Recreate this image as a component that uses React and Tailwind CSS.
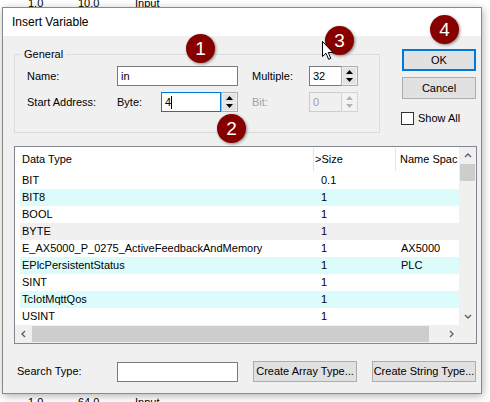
import React from "react";

function Tri({ up, color }) {
  return (
    <svg width="7" height="4" viewBox="0 0 7 4" className="block">
      {up ? (
        <path d="M3.5 0 L7 4 L0 4 Z" fill={color} />
      ) : (
        <path d="M0 0 L7 0 L3.5 4 Z" fill={color} />
      )}
    </svg>
  );
}

function Spinner({ disabled }) {
  const c = disabled ? "#b5b5b5" : "#000";
  return (
    <div className={`flex flex-col w-[17px] h-full border ${disabled ? "border-[#d5d5d5]" : "border-[#adadad]"} bg-[#f0f0f0] p-[1px] gap-[1px]`}>
      <div className={`flex-1 flex items-center justify-center ${disabled ? "bg-[#f4f4f4]" : "bg-[#e3e3e3]"}`}>
        <Tri up color={c} />
      </div>
      <div className={`flex-1 flex items-center justify-center ${disabled ? "bg-[#f4f4f4]" : "bg-[#e3e3e3]"}`}>
        <Tri color={c} />
      </div>
    </div>
  );
}

function Badge({ n, cls }) {
  return (
    <div
      className={`absolute ${cls} w-[29px] h-[29px] rounded-full bg-[#870000] text-white text-[19px] leading-none flex items-center justify-center shadow-[1px_1px_3px_rgba(0,0,0,0.45)] font-['Liberation_Sans',Arial,sans-serif]`}
    >
      {n}
    </div>
  );
}

function Chevron({ dir }) {
  const paths = {
    up: "M1 5 L4 2 L7 5",
    down: "M1 2 L4 5 L7 2",
    left: "M5 1 L2 4 L5 7",
    right: "M3 1 L6 4 L3 7",
  };
  return (
    <svg width="8" height="8" viewBox="0 0 8 8" className="block">
      <path d={paths[dir]} fill="none" stroke="#606060" strokeWidth="1.4" />
    </svg>
  );
}

const rows = [
  { t: "BIT", s: "0.1", n: "", bg: "bg-white" },
  { t: "BIT8", s: "1", n: "", bg: "bg-[#dcfcfc]" },
  { t: "BOOL", s: "1", n: "", bg: "bg-white" },
  { t: "BYTE", s: "1", n: "", bg: "bg-[#f0f0f0]" },
  { t: "E_AX5000_P_0275_ActiveFeedbackAndMemory", s: "1", n: "AX5000", bg: "bg-white" },
  { t: "EPlcPersistentStatus", s: "1", n: "PLC", bg: "bg-[#dcfcfc]" },
  { t: "SINT", s: "1", n: "", bg: "bg-white" },
  { t: "TcIotMqttQos", s: "1", n: "", bg: "bg-[#dcfcfc]" },
  { t: "USINT", s: "1", n: "", bg: "bg-white" },
];

export default function App() {
  return (
    <div className="relative w-[490px] h-[402px] bg-white overflow-hidden font-['Liberation_Sans',Arial,sans-serif] text-[11px] leading-[13px] text-black">
      {/* backdrop text of the application behind */}
      <div className="absolute left-[28px] top-[-3px] flex text-[11px] leading-[13px] text-black">
        <span className="w-[50px]">1.0</span>
        <span className="w-[57px]">10.0</span>
        <span>Input</span>
      </div>
      <div className="absolute left-[28px] top-[396px] flex text-[11px] leading-[13px] text-black">
        <span className="w-[50px]">1.0</span>
        <span className="w-[57px]">64.0</span>
        <span>Input</span>
      </div>

      {/* dialog window */}
      <div className="absolute left-[2px] top-[7px] w-[480px] h-[387px] border border-[#8a8a8a] bg-[#f0f0f0] flex flex-col shadow-[1px_2px_8px_rgba(0,0,0,0.3)]">
        {/* title bar */}
        <div className="h-[28px] bg-white flex items-center pl-[9px] text-[12px] text-black">
          Insert Variable
        </div>

        {/* body */}
        <div className="flex-1 flex flex-col pl-[11px]">
          <div className="flex items-start">
            {/* General group */}
            <div className="relative mt-[18px] w-[366px] h-[79px] border border-[#dcdcdc]">
              <span className="absolute left-[6px] top-[-7px] px-[3px] bg-[#f0f0f0]">General</span>
              <div className="flex flex-col gap-[6px] pt-[11px] pl-[12px]">
                <div className="flex items-center h-[20px]">
                  <span className="w-[90px]">Name:</span>
                  <div className="w-[121px] h-[20px] border border-[#7a7a7a] bg-white flex items-center px-[3px]">in</div>
                  <span className="ml-[14px] w-[57px]">Multiple:</span>
                  <div className="w-[49px] h-[20px] flex">
                    <div className="flex-1 border border-r-0 border-[#7a7a7a] bg-white flex items-center px-[3px]">32</div>
                    <Spinner />
                  </div>
                </div>
                <div className="flex items-center h-[20px]">
                  <span className="w-[90px]">Start Address:</span>
                  <span className="w-[44px]">Byte:</span>
                  <div className="w-[77px] h-[20px] flex">
                    <div className="flex-1 border border-[#0078d7] bg-white flex items-center px-[3px]">
                      4<span className="inline-block w-[1px] h-[13px] bg-black"></span>
                    </div>
                    <Spinner />
                  </div>
                  <span className="ml-[14px] w-[57px] text-[#a0a0a0]">Bit:</span>
                  <div className="w-[49px] h-[20px] flex">
                    <div className="flex-1 border border-r-0 border-[#cccccc] bg-[#f0f0f0] flex items-center px-[3px] text-[#a0a0a0]">0</div>
                    <Spinner disabled />
                  </div>
                </div>
              </div>
            </div>

            {/* right buttons */}
            <div className="ml-[22px] mt-[13px] w-[74px] flex flex-col">
              <div className="h-[22px] border-2 border-[#0078d7] bg-[#e1e1e1] flex items-center justify-center">OK</div>
              <div className="mt-[6px] h-[22px] border border-[#adadad] bg-[#e1e1e1] flex items-center justify-center">Cancel</div>
              <div className="mt-[13px] -ml-[1px] flex items-center">
                <div className="w-[13px] h-[13px] border border-[#333333] bg-white"></div>
                <span className="ml-[4px]">Show All</span>
              </div>
            </div>
          </div>

          {/* list view */}
          <div className="mt-[13px] w-[463px] h-[198px] border border-[#828790] bg-white flex flex-col">
            <div className="flex h-[178px]">
              <div className="flex-1 flex flex-col overflow-hidden pl-[5px]">
                <div className="h-[25px] flex shrink-0">
                  <div className="w-[293px] flex items-center pl-[2px]">Data Type</div>
                  <div className="w-[82px] flex items-center pl-[1px] border-l border-[#e5e5e5] my-[1px]">&gt;Size</div>
                  <div className="flex-1 flex items-center pl-[4px] border-l border-[#e5e5e5] my-[1px] whitespace-nowrap overflow-hidden">Name Spac</div>
                </div>
                {rows.map((r) => (
                  <div key={r.t} className={`h-[17px] shrink-0 flex items-center ${r.bg}`}>
                    <div className="w-[293px] pl-[2px] whitespace-nowrap">{r.t}</div>
                    <div className="w-[82px] pl-[8px]">{r.s}</div>
                    <div className="flex-1 pl-[6px] whitespace-nowrap">{r.n}</div>
                  </div>
                ))}
              </div>
              {/* vertical scrollbar */}
              <div className="w-[17px] bg-[#f0f0f0] flex flex-col">
                <div className="h-[17px] flex items-center justify-center"><Chevron dir="up" /></div>
                <div className="h-[17px] bg-[#cdcdcd] mx-[1px]"></div>
                <div className="flex-1"></div>
                <div className="h-[17px] flex items-center justify-center"><Chevron dir="down" /></div>
              </div>
            </div>
            {/* horizontal scrollbar */}
            <div className="flex h-[18px]">
              <div className="flex-1 bg-[#f0f0f0] flex">
                <div className="w-[17px] flex items-center justify-center"><Chevron dir="left" /></div>
                <div className="w-[397px] bg-[#cdcdcd] my-[1px]"></div>
                <div className="flex-1"></div>
                <div className="w-[17px] flex items-center justify-center"><Chevron dir="right" /></div>
              </div>
              <div className="w-[17px] bg-[#f0f0f0]"></div>
            </div>
          </div>

          {/* bottom row */}
          <div className="mt-[17px] h-[21px] flex items-center">
            <span className="w-[103px] pl-[3px]">Search Type:</span>
            <div className="w-[121px] h-[20px] border border-[#7a7a7a] bg-white"></div>
            <div className="ml-[15px] w-[104px] h-[21px] border border-[#adadad] bg-[#e1e1e1] flex items-center justify-center whitespace-nowrap">Create Array Type...</div>
            <div className="ml-[15px] w-[104px] h-[21px] border border-[#adadad] bg-[#e1e1e1] flex items-center justify-center whitespace-nowrap">Create String Type...</div>
          </div>
        </div>
      </div>

      {/* annotation badges */}
      <Badge n="1" cls="left-[186px] top-[34px]" />
      <Badge n="2" cls="left-[217px] top-[114px]" />
      <Badge n="3" cls="left-[325px] top-[26px]" />
      <Badge n="4" cls="left-[430px] top-[15px]" />

      {/* mouse cursor */}
      <svg className="absolute left-[322px] top-[41px]" width="13" height="20" viewBox="0 0 13 20">
        <path d="M0.5 0.5 L0.5 15.5 L4 12.2 L6.6 18.3 L8.8 17.4 L6.3 11.5 L11 11.5 Z" fill="#fff" stroke="#000" strokeWidth="1" strokeLinejoin="round" />
      </svg>
    </div>
  );
}
